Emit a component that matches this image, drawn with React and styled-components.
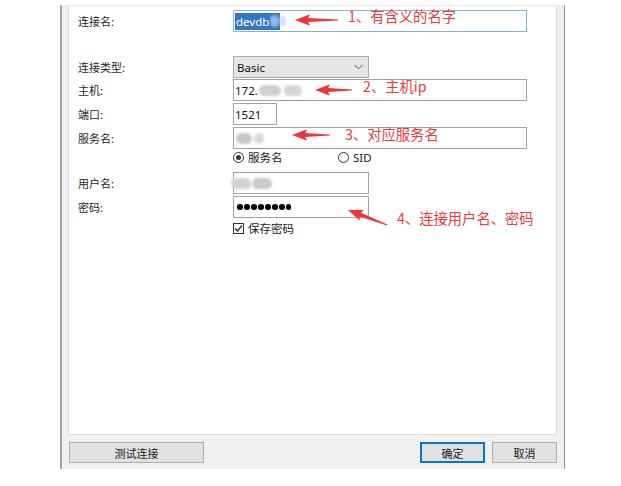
import React from 'react';
import styled, { createGlobalStyle } from 'styled-components';

const GlobalStyle = createGlobalStyle`
  html, body { margin: 0; padding: 0; background: #fff; }
  body { font-family: "Noto Sans", "Noto Sans CJK SC", sans-serif; color: #1a1a1a; }
`;

const Page = styled.div`
  position: relative;
  width: 621px;
  height: 486px;
  padding: 5px 0 0 60px;
  box-sizing: border-box;
  overflow: hidden;
`;

const Window = styled.div`
  width: 505px;
  height: 464px;
  box-sizing: border-box;
  background: #f0f0f0;
  border-left: 2px solid #a3a3a3;
  border-right: 1px solid #8f8f8f;
  border-top: 1px solid #ececec;
  padding: 0 7px 6px 6px;
  display: flex;
  flex-direction: column;
`;

const Panel = styled.div`
  height: 429px;
  box-sizing: border-box;
  background: #fff;
  border: 1px solid #dcdcdc;
  border-top: none;
  padding: 4px 0 0 9px;
  display: flex;
  flex-direction: column;
`;

const Row = styled.div`
  display: flex;
  align-items: center;
  height: ${(p) => p.h || 22}px;
  margin-top: ${(p) => p.mt || 0}px;
`;

const Label = styled.div`
  width: 155px;
  flex: none;
  font-size: 11px;
  font-family: "Noto Sans CJK SC", sans-serif;
  color: #1f1f1f;
`;

const TextBox = styled.div`
  width: ${(p) => p.w}px;
  height: 22px;
  box-sizing: border-box;
  border: 1px solid ${(p) => (p.focused ? '#7db3e6' : '#a2a2a2')};
  background: #fff;
  padding-left: 1px;
  display: flex;
  align-items: center;
  font-size: 11.5px;
  color: #111;
  white-space: nowrap;
`;

const Selected = styled.span`
  background: #3572c9;
  color: #fff;
  padding: 1px;
  display: inline-flex;
  align-items: center;
  height: 15px;
`;

const Smudge = styled.span`
  display: inline-block;
  width: ${(p) => p.w}px;
  height: ${(p) => p.h || 11}px;
  margin-left: ${(p) => p.ml || 0}px;
  border-radius: 6px;
  background: ${(p) => p.c || '#cfcfcf'};
  filter: blur(1.3px);
`;

const Select = styled.div`
  width: 136px;
  height: 22px;
  box-sizing: border-box;
  border: 1px solid #adadad;
  background: #e5e5e5;
  padding: 0 5px 0 3px;
  display: flex;
  align-items: center;
  justify-content: space-between;
  font-size: 11.5px;
  color: #111;
`;

const Choice = styled.div`
  display: flex;
  align-items: center;
  gap: 4px;
  width: ${(p) => p.w || 'auto'}px;
  font-size: 11.5px;
  font-family: "Noto Sans", "Noto Sans CJK SC", sans-serif;
  color: #1a1a1a;
`;

const Radio = styled.span`
  width: 11px;
  height: 11px;
  box-sizing: border-box;
  border: 1px solid #333;
  border-radius: 50%;
  display: inline-flex;
  align-items: center;
  justify-content: center;
  &::after {
    content: '';
    width: 5px;
    height: 5px;
    border-radius: 50%;
    background: ${(p) => (p.checked ? '#333' : 'transparent')};
  }
`;

const Check = styled.span`
  width: 11px;
  height: 11px;
  box-sizing: border-box;
  border: 1px solid #333;
  display: inline-flex;
  align-items: center;
  justify-content: center;
`;

const Dots = styled.div`
  display: flex;
  gap: 1.4px;
  padding-left: 2px;
`;

const Dot = styled.span`
  width: 5.6px;
  height: 5.6px;
  border-radius: 50%;
  background: #000;
`;

const Footer = styled.div`
  display: flex;
  padding: 7px 0 0 1px;
  gap: 7px;
`;

const Button = styled.div`
  width: ${(p) => p.w}px;
  height: 21px;
  box-sizing: border-box;
  background: #e1e1e1;
  border: 1px solid ${(p) => (p.primary ? '#0078d7' : '#adadad')};
  box-shadow: ${(p) => (p.primary ? 'inset 0 0 0 1px #0078d7' : 'none')};
  margin-left: ${(p) => (p.push ? 'auto' : '0')};
  display: flex;
  align-items: center;
  justify-content: center;
  font-size: 11px;
  font-family: "Noto Sans CJK SC", sans-serif;
  color: #222;
`;

const Note = styled.div`
  position: absolute;
  left: ${(p) => p.x}px;
  top: ${(p) => p.y}px;
  font-size: 14.3px;
  line-height: 15px;
  font-family: "Noto Sans CJK SC", sans-serif;
  color: #f0393c;
  white-space: nowrap;
`;

const ArrowSvg = styled.svg`
  position: absolute;
  left: ${(p) => p.x}px;
  top: ${(p) => p.y - 7}px;
  transform-origin: 0 7px;
  transform: rotate(${(p) => p.angle || 0}deg);
  overflow: visible;
`;

function Arrow({ x, y, length, angle }) {
  const L = length;
  return (
    <ArrowSvg x={x} y={y} angle={angle} width={L} height={14}>
      <polygon
        points={`0,7 15,1.2 13,5 ${L},6.5 ${L},7.5 13,9 15,12.8`}
        fill="#f0353a"
      />
    </ArrowSvg>
  );
}

function Chevron() {
  return (
    <svg width="9" height="6" viewBox="0 0 9 6">
      <polyline points="0.5,0.8 4.5,4.8 8.5,0.8" fill="none" stroke="#555" strokeWidth="1" />
    </svg>
  );
}

function Tick() {
  return (
    <svg width="9" height="9" viewBox="0 0 9 9">
      <polyline points="1,4.5 3.5,7 8,1.5" fill="none" stroke="#222" strokeWidth="1.2" />
    </svg>
  );
}

export default function App() {
  return (
    <>
      <GlobalStyle />
      <Page>
        <Window>
          <Panel>
            <Row>
              <Label>连接名:</Label>
              <TextBox w={294} focused>
                <Selected>
                  devdb
                  <Smudge w={9} h={12} c="#8fb6ea" ml={1} />
                </Selected>
                <Smudge w={6} h={10} c="#cfe0f6" />
              </TextBox>
            </Row>
            <Row mt={24}>
              <Label>连接类型:</Label>
              <Select>
                Basic
                <Chevron />
              </Select>
            </Row>
            <Row mt={1}>
              <Label>主机:</Label>
              <TextBox w={294}>
                172.
                <Smudge w={22} ml={1} />
                <Smudge w={18} ml={3} c="#d6d6d6" />
              </TextBox>
            </Row>
            <Row mt={2}>
              <Label>端口:</Label>
              <TextBox w={44}>1521</TextBox>
            </Row>
            <Row mt={2}>
              <Label>服务名:</Label>
              <TextBox w={294}>
                <Smudge w={16} ml={1} c="#c9c9c9" />
                <Smudge w={10} ml={2} c="#dadada" />
              </TextBox>
            </Row>
            <Row h={14} mt={1}>
              <Label />
              <Choice w={105}>
                <Radio checked />
                服务名
              </Choice>
              <Choice>
                <Radio />
                SID
              </Choice>
            </Row>
            <Row mt={8}>
              <Label>用户名:</Label>
              <TextBox w={136}>
                <Smudge w={20} ml={-4} c="#d2d2d2" />
                <Smudge w={20} ml={1} c="#cacaca" />
              </TextBox>
            </Row>
            <Row mt={2}>
              <Label>密码:</Label>
              <TextBox w={136}>
                <Dots>
                  {Array.from({ length: 8 }).map((_, i) => (
                    <Dot key={i} />
                  ))}
                </Dots>
              </TextBox>
            </Row>
            <Row h={14} mt={3}>
              <Label />
              <Choice>
                <Check>
                  <Tick />
                </Check>
                保存密码
              </Choice>
            </Row>
          </Panel>
          <Footer>
            <Button w={135}>测试连接</Button>
            <Button w={65} primary push>
              确定
            </Button>
            <Button w={65}>取消</Button>
          </Footer>
        </Window>

        <Arrow x={295} y={20} length={43} />
        <Note x={348} y={8}>1、有含义的名字</Note>
        <Arrow x={315} y={90} length={37} />
        <Note x={363} y={78}>2、主机ip</Note>
        <Arrow x={292} y={135} length={38} />
        <Note x={345} y={126}>3、对应服务名</Note>
        <Arrow x={348} y={210} length={42} angle={21} />
        <Note x={397} y={210}>4、连接用户名、密码</Note>
      </Page>
    </>
  );
}
